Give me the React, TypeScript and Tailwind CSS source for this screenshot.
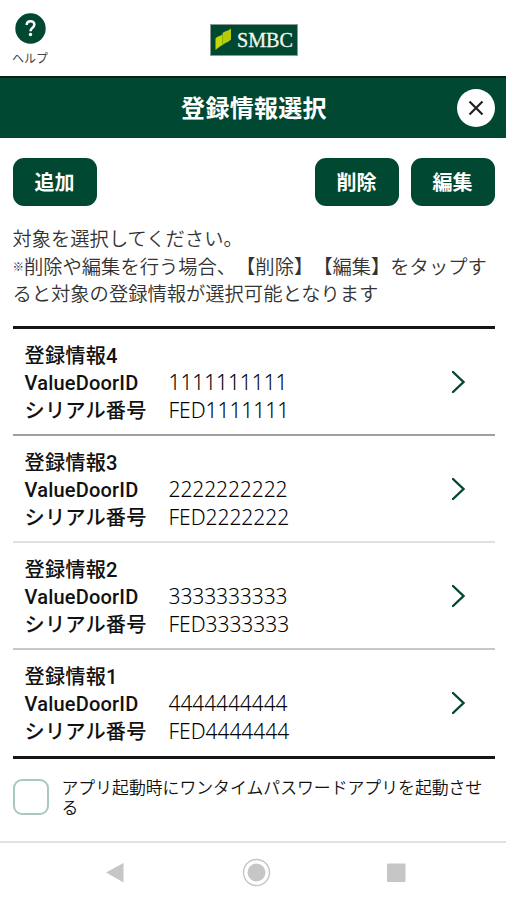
interface Registration {
    name: string;
    doorId: string;
    serial: string;
    border: string;
}

const registrations: Registration[] = [
    { name: "登録情報4", doorId: "1111111111", serial: "FED1111111", border: "h-[107px] border-b-2 border-[#a0a0a0]" },
    { name: "登録情報3", doorId: "2222222222", serial: "FED2222222", border: "h-[107px] border-b-2 border-[#e0e0e0]" },
    { name: "登録情報2", doorId: "3333333333", serial: "FED3333333", border: "h-[107px] border-b-2 border-[#c8c8c8]" },
    { name: "登録情報1", doorId: "4444444444", serial: "FED4444444", border: "h-[109px] border-b-[3px] border-[#151515]" },
];

function Logo() {
    return (
        <svg width="88" height="32" viewBox="0 0 88 32">
            <rect x="0.5" y="0.5" width="87" height="31" fill="#004831" stroke="#8a9c92" />
            <path d="M5.500 14.500C7.500 12 10 12.500 12.500 10.500V21C10 22.500 8 23.500 5.500 26z" fill="#c4d700" />
            <path d="M12.500 9C15 7 18 7 21 4.500V15.500C18.500 18.500 15 18.500 12.500 21z" fill="#b5cc08" />
            <text
                x="27"
                y="23"
                textLength="56"
                lengthAdjust="spacingAndGlyphs"
                fill="#f4f6ee"
                fontSize="21"
                fontFamily="'Liberation Serif', serif"
                stroke="#f4f6ee"
                strokeWidth="0.3"
            >
                SMBC
            </text>
        </svg>
    );
}

function ActionButton({ label }: { label: string }) {
    return (
        <button className="h-12 w-[84px] rounded-[11px] bg-[#004831] text-[20px] font-bold text-white">
            {label}
        </button>
    );
}

function RegistrationRow({ item }: { item: Registration }) {
    return (
        <li className={`flex items-start justify-between pt-3 pr-[29px] pl-3 ${item.border}`}>
            <div>
                <h2 className="h-7 pt-0.5 font-['Roboto','Noto_Sans_CJK_JP',sans-serif] text-[20.2px] leading-[27px] font-medium tracking-[0.2px]">
                    {item.name}
                </h2>
                <dl className="grid grid-cols-[144px_auto] grid-rows-[28px_27px] text-[20.2px] leading-[27px]">
                    <dt className="pt-px font-['Roboto',sans-serif] text-[20px] font-medium tracking-[0.2px]">
                        ValueDoorID
                    </dt>
                    <dd className="font-['Noto_Sans',sans-serif] text-[21px] font-light tracking-[-0.1px] text-black">
                        {item.doorId}
                    </dd>
                    <dt className="-mt-px font-medium tracking-[0.2px]">シリアル番号</dt>
                    <dd className="font-['Noto_Sans',sans-serif] text-[21px] font-light tracking-[-0.05px] text-black">
                        {item.serial}
                    </dd>
                </dl>
            </div>
            <svg
                className="mt-7"
                width="14"
                height="25"
                viewBox="0 0 14 25"
                fill="none"
                stroke="#004831"
                strokeWidth="2.400"
                strokeLinecap="round"
            >
                <path d="M1 3l10.500 10L1 23" />
            </svg>
        </li>
    );
}

export default function App() {
    return (
        <div className="flex h-[900px] w-[506px] flex-col overflow-hidden bg-white font-['Noto_Sans_CJK_JP',sans-serif] text-[#111]">
            <header className="grid h-[76px] grid-cols-3 px-3">
                <button className="flex w-9 flex-col items-center pt-[13px]">
                    <svg width="31" height="31" viewBox="0 0 31 31">
                        <circle cx="15.500" cy="15.500" r="15.200" fill="#004831" />
                        <path
                            d="M11.700 12c0-5 7.700-5 7.700-.4 0 3.200-3.900 3.100-3.900 6.700"
                            fill="none"
                            stroke="#fff"
                            strokeWidth="2.500"
                        />
                        <circle cx="15.500" cy="21.500" r="1.700" fill="#fff" />
                    </svg>
                    <span className="mt-1 text-[12px] leading-[20px] whitespace-nowrap text-[#444]">ヘルプ</span>
                </button>
                <div className="flex justify-center pt-6 pl-0.5">
                    <Logo />
                </div>
            </header>

            <div className="grid h-[62px] grid-cols-[1fr_auto_1fr] items-center border-t-2 border-[#0a1f16] bg-[#004831] px-[11px]">
                <h1 className="col-start-2 pb-0.5 pl-0.5 text-[24px] font-bold tracking-[0.3px] text-white">
                    登録情報選択
                </h1>
                <button className="flex size-[38px] items-center justify-center justify-self-end rounded-full bg-white">
                    <svg width="16" height="16" viewBox="0 0 16 16" stroke="#222" strokeWidth="2.200">
                        <path d="M1.500 1.500l13 13M14.500 1.500l-13 13" />
                    </svg>
                </button>
            </div>

            <main className="flex-1 pr-[11.5px] pl-[12.5px]">
                <div className="flex justify-between pt-[19.5px]">
                    <ActionButton label="追加" />
                    <div className="flex gap-3">
                        <ActionButton label="削除" />
                        <ActionButton label="編集" />
                    </div>
                </div>

                <p className="mt-[19.5px] text-[19.3px] leading-[27.5px] font-[350] whitespace-nowrap text-[#333] [text-spacing-trim:space-all]">
                    対象を選択してください。
                    <br />
                    <span className="inline-block w-[11.500px] align-[3px] text-[11.500px] leading-none">※</span>
                    削除や編集を行う場合、【削除】【編集】をタップす
                    <br />
                    ると対象の登録情報が選択可能となります
                </p>

                <ul className="mt-[18px] border-t-[3px] border-[#151515]">
                    {registrations.map((item) => (
                        <RegistrationRow key={item.name} item={item} />
                    ))}
                </ul>

                <label className="mt-5 flex gap-[13px]">
                    <span className="size-9 shrink-0 rounded-[9px] border-2 border-[#a9c9ba]" />
                    <span className="-mt-[1.5px] text-[16.850px] leading-5 font-[350] whitespace-nowrap text-[#111]">
                        アプリ起動時にワンタイムパスワードアプリを起動させ
                        <br />る
                    </span>
                </label>
            </main>

            <nav className="h-[59px] border-t-2 border-[#e2e2e2]">
                <svg width="506" height="57" viewBox="0 0 506 57" fill="#c6c6c6">
                    <path d="M106 29.500L123.500 20v19.500z" />
                    <circle cx="256.500" cy="29.500" r="9" />
                    <circle cx="256.500" cy="29.500" r="13" fill="none" stroke="#c6c6c6" strokeWidth="1.400" />
                    <rect x="387" y="20.500" width="18.500" height="18.500" rx="1" />
                </svg>
            </nav>
        </div>
    );
}
